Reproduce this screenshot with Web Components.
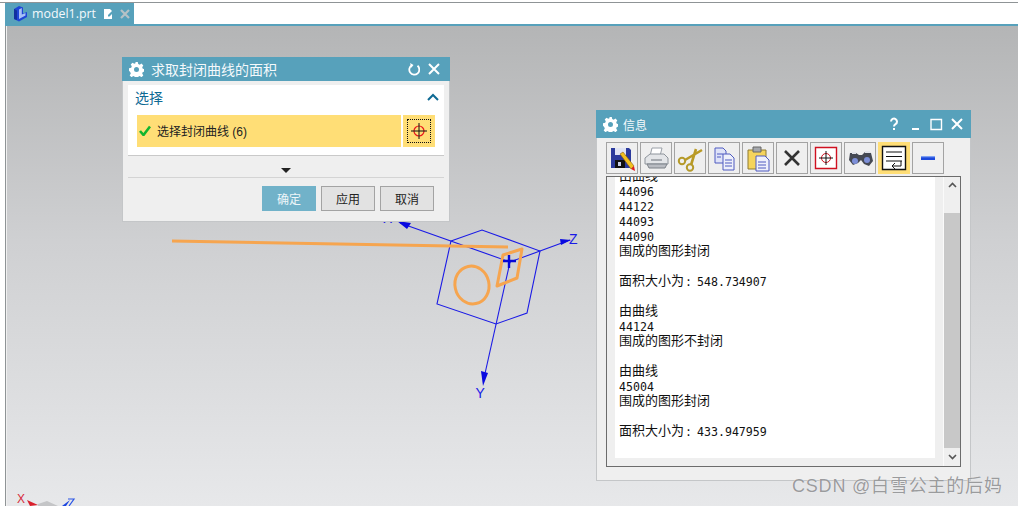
<!DOCTYPE html>
<html>
<head>
<meta charset="utf-8">
<title>model1.prt</title>
<style>
  html, body { margin: 0; height: 100%; background: #fff; overflow: hidden; }
  body { font-family: "Liberation Sans", "Noto Sans CJK SC", sans-serif; }
  .info-text { white-space: pre; }
  .info-text span { font-family: "Noto Sans CJK SC", sans-serif; font-size: 13px; line-height: 9px; vertical-align: top; }
  .info-text i { font-style: normal; letter-spacing: -1px; margin-left: 1px; }
</style>
</head>
<body>
<cad-app>
  <cad-triad></cad-triad>
  <cad-window slot="windows" heading="求取封闭曲线的面积" style="left:115px;top:31px;width:328px;height:165px;--title-size:14px;--title-gap:7px" controls="reset close">
    <curve-dialog></curve-dialog>
  </cad-window>
  <cad-window slot="windows" heading="信息" style="left:589px;top:84px;width:375px;height:371px;--title-size:12px;--title-gap:5px" controls="help min max close">
    <info-panel>
      <tool-button icon="save"></tool-button>
      <tool-button icon="print"></tool-button>
      <tool-button icon="cut"></tool-button>
      <tool-button icon="copy"></tool-button>
      <tool-button icon="paste"></tool-button>
      <tool-button icon="delete"></tool-button>
      <tool-button icon="target"></tool-button>
      <tool-button icon="find"></tool-button>
      <tool-button icon="wrap" active></tool-button>
      <tool-button icon="minus"></tool-button>
      <div slot="text" class="info-text"><span>由曲线</span>
44096
44122
44093
44090
<span>围成的图形封闭</span>

<span>面积大小为</span><i>: </i>548.734907

<span>由曲线</span>
44124
<span>围成的图形不封闭</span>

<span>由曲线</span>
45004
<span>围成的图形封闭</span>

<span>面积大小为</span><i>: </i>433.947959</div>
    </info-panel>
  </cad-window>
</cad-app>

<script>
const appTemplate = document.createElement('template');
appTemplate.innerHTML = `
  <style>
    :host {
        display: flex;
        flex-direction: column;
        height: 506px;
        width: 1018px;
        position: relative;
        overflow: hidden;
    }
    .topline { height: 1px; margin-top: 2px; background: #8f9496; flex: none; }
    .tabs { height: 21px; flex: none; display: flex; padding-left: 5px; }
    .tab {
        width: 129px;
        background: #57a1bb;
        color: #f4f9fb;
        display: flex;
        align-items: center;
        font-size: 12.4px;
        box-sizing: border-box;
        padding-left: 7px;
    }
    .tab span { margin-left: 4px; width: 65px; font-family: "Open Sans", "Liberation Sans", sans-serif; }
    .tab svg { display: block; flex: none; }
    .rule { height: 2px; background: #57a1bb; flex: none; margin-left: 5px; }
    .view {
        flex: 1;
        margin-left: 6px;
        border-left: 1px solid #f0f0f0;
        position: relative;
        background: linear-gradient(#b4b5b6, #cfd0d2 45%, #e7e8ea);
        box-shadow: -1px 0 0 #8f9496;
    }
    .mark {
        position: absolute;
        left: 785px;
        top: 448px;
        font-size: 18px;
        line-height: 24px;
        letter-spacing: .8px;
        color: #9a9b9d;
        text-shadow: 0 0 1px #fff;
        white-space: nowrap;
    }
  </style>
  <div class="topline"></div>
  <div class="tabs">
    <div class="tab">
      <svg width="16" height="17" viewBox="0 0 16 17"><path d="M2 4 7 1l4 1.500v6L15 7v5l-8 4.500L2 14z" fill="#1f46d6"/><path d="M7 4.500 9.800 3v6.500L13.500 8v2.500L7 14z" fill="#a7c0f6"/><path d="M2 4l3 1.500V15l-3-1z" fill="#11309f"/></svg>
      <span>model1.prt</span>
      <svg width="11" height="12" viewBox="0 0 11 12" style="margin-left:6px"><path d="M1 1h6l2 2v8H1z" fill="#fff"/><path d="M5 7l4-4 1.500 1.500-4 4H5z" fill="#57a1bb"/></svg>
      <svg width="10" height="10" viewBox="0 0 10 10" style="margin-left:6px"><path d="M1 1l8 8M9 1 1 9" stroke="#b7c2c6" stroke-width="2.200"/></svg>
    </div>
  </div>
  <div class="rule"></div>
  <div class="view" id="view">
    <slot></slot>
    <slot name="windows"></slot>
    <div class="mark">CSDN @白雪公主的后妈</div>
  </div>
`;

class CadApp extends HTMLElement {
    constructor() {
        super();
        this.attachShadow({mode: 'open'}).appendChild(appTemplate.content.cloneNode(true));
    }
}

const triadTemplate = document.createElement('template');
triadTemplate.innerHTML = `
  <style>
    :host { position: absolute; left: -7px; top: -26px; width: 1018px; height: 506px; display: block; }
    svg { display: block; }
    text { font: 14px "Liberation Sans", sans-serif; }
  </style>
  <svg width="1018" height="506" viewBox="0 0 1018 506">
    <g fill="none" stroke="#1a1ae6" stroke-width="1.100">
      <path d="M451 241 482 230 540 251 527 313 496 324 437 304z"/>
      <path d="M400 223 510 262 570 240"/>
      <path d="M510 262 484 378"/>
    </g>
    <path d="M397 221 411 223 407 229z" fill="#0a0ae0"/>
    <path d="M571 240 560 239 561 245z" fill="#0a0ae0"/>
    <path d="M483 386 481 371 488 373z" fill="#0a0ae0"/>
    <g fill="none" stroke="#f6a54f" stroke-width="3">
      <path d="M172 241 508 247"/>
      <ellipse cx="472" cy="285" rx="17" ry="19" transform="rotate(-12 472 285)"/>
      <path d="M503 255 522 249 517 278 497 286z" stroke-linejoin="round"/>
    </g>
    <path d="M509 255v13M503 261h13" stroke="#0606d8" stroke-width="2.400"/>
    <text x="383" y="223" fill="#1a1ae6">X</text>
    <text x="569" y="244" fill="#1a1ae6">Z</text>
    <text x="475.500" y="398" fill="#1a1ae6">Y</text>
    <text x="17" y="503" fill="#d62c3c" style="font-size:12px">X</text>
    <path d="M27 500 38 505 30 506z" fill="#d9202c"/>
    <path d="M38 504 47 501 58 506H38z" fill="#c4c5c7"/>
    <path d="M62 506 70 500 66 506z" fill="#1a44e0"/>
    <path d="M68 499h6l-5 7" fill="none" stroke="#2a55e6" stroke-width="1.200"/>
  </svg>
`;

class CadTriad extends HTMLElement {
    constructor() {
        super();
        this.attachShadow({mode: 'open'}).appendChild(triadTemplate.content.cloneNode(true));
    }
}

const controlIcons = {
    reset: '<path d="M11.500 3.800A5 5 0 1 1 6 3.200" fill="none" stroke="#fff" stroke-width="1.800"/><path d="M4.500 0.800v5l3-2.500z" fill="#fff" transform="rotate(-10 6 3)"/>',
    close: '<path d="M2 2l10 10M12 2 2 12" stroke="#fff" stroke-width="2"/>',
    min: '<path d="M4 12h7" stroke="#fff" stroke-width="2"/>',
    max: '<path d="M2 2.500h10.500V12.500H2z" fill="none" stroke="#fff" stroke-width="1.400"/>',
    help: '<path d="M4 4.500a3 3 0 1 1 4.500 2.700C7.400 7.900 7 8.400 7 9.500" fill="none" stroke="#fff" stroke-width="2"/><path d="M6 11h2v2H6z" fill="#fff"/>'
};

const gearIcon = `<svg width="15" height="15" viewBox="0 0 15 15"><g fill="#fff"><path fill-rule="evenodd" d="M6.200 0h2.600l.4 2 1.500.7 1.800-1.100 1.800 1.800-1.100 1.800.6 1.500 2.100.4v2.600l-2.100.4-.6 1.500 1.100 1.800-1.800 1.800-1.800-1.100-1.500.6-.4 2.100H6.200l-.4-2.100-1.500-.6-1.800 1.100-1.800-1.800 1.100-1.800-.6-1.500L0 8.800V6.200l2.200-.4.600-1.500-1.100-1.800 1.800-1.800 1.800 1.100 1.500-.7zM7.500 5a2.500 2.500 0 1 0 0 5 2.500 2.500 0 0 0 0-5z"/></g></svg>`;

const windowTemplate = document.createElement('template');
windowTemplate.innerHTML = `
  <style>
    :host {
        position: absolute;
        display: flex;
        flex-direction: column;
        box-sizing: border-box;
        background: #efefef;
        box-shadow: inset 0 0 0 1px #c4c6c8;
    }
    .bar {
        height: 24px;
        flex: none;
        background: #57a1bb;
        color: #f4f9fb;
        display: flex;
        align-items: center;
        padding: 0 9px 0 7px;
        font-size: var(--title-size, 13px);
    }
    .bar svg { display: block; flex: none; }
    .title { flex: 1; margin-left: var(--title-gap, 8px); }
    .controls { display: flex; gap: 7px; }
    .body { flex: 1; min-height: 0; display: flex; flex-direction: column; }
    ::slotted(*) { flex: 1; }
  </style>
  <div class="bar">
    <span id="gear"></span>
    <div class="title" id="title"></div>
    <div class="controls" id="controls"></div>
  </div>
  <div class="body"><slot></slot></div>
`;

class CadWindow extends HTMLElement {
    constructor() {
        super();
        this.attachShadow({mode: 'open'}).appendChild(windowTemplate.content.cloneNode(true));
    }

    $(selector) {
        return this.shadowRoot.querySelector(selector);
    }

    connectedCallback() {
        this.$('#title').textContent = this.getAttribute('heading');
        this.$('#gear').innerHTML = gearIcon;
        const names = (this.getAttribute('controls') || '').split(' ');
        this.$('#controls').innerHTML = names.map(name =>
            `<svg width="14" height="14" viewBox="0 0 14 14">${controlIcons[name]}</svg>`).join('');
        if (names.includes('help')) {
            this.$('.bar').style.height = '28px';
            this.$('.bar').style.paddingRight = '7px';
        }
    }
}

const dialogTemplate = document.createElement('template');
dialogTemplate.innerHTML = `
  <style>
    :host { display: flex; flex-direction: column; font-size: 12px; color: #222; }
    .group {
        margin: 4px 6px 0;
        height: 71px;
        box-sizing: border-box;
        background: #fff;
        border-bottom: 1px solid #c9c9c9;
        padding: 0 9px;
    }
    .head {
        height: 30px;
        display: flex;
        align-items: center;
        justify-content: space-between;
        color: #0e6a94;
        font-size: 14px;
        margin-left: -2px;
        padding-bottom: 6px;
        box-sizing: border-box;
    }
    .head svg { display: block; margin-right: -4px; }
    .row { display: flex; gap: 2px; height: 32px; }
    .pick {
        flex: 1;
        background: #ffde76;
        display: flex;
        align-items: center;
        padding: 0 0 2px 2px;
        box-sizing: border-box;
        gap: 6px;
    }
    .pick svg { display: block; }
    .target {
        width: 32px;
        background: #ffde76;
        display: flex;
        align-items: center;
        justify-content: center;
    }
    .target div { width: 24px; height: 24px; border: 1px dotted #111; box-sizing: border-box; }
    .target svg { display: block; margin: 0; }
    .more { height: 22px; padding-top: 7px; box-sizing: border-box; display: flex; align-items: center; justify-content: center; border-bottom: 1px solid #d4d4d4; margin: 0 6px; }
    .more i { border: 5px solid transparent; border-top: 5px solid #222; border-bottom: 0; display: block; }
    .actions { display: flex; justify-content: flex-end; gap: 5px; padding: 8px 16px 0 0; }
    .btn {
        width: 54px;
        height: 25px;
        box-sizing: border-box;
        border: 1px solid #a3a3a3;
        background: #e2e2e2;
        display: flex;
        align-items: center;
        justify-content: center;
    }
    .btn.primary { background: #71b2c9; border-color: #71b2c9; color: #eef6f9; }
  </style>
  <div class="group">
    <div class="head">
      <span>选择</span>
      <svg width="12" height="8" viewBox="0 0 12 8"><path d="M1 7 6 2l5 5" fill="none" stroke="#0e6a94" stroke-width="2"/></svg>
    </div>
    <div class="row">
      <div class="pick">
        <svg width="12" height="11" viewBox="0 0 12 11"><path d="M1 6l3.500 4L11 1.500" fill="none" stroke="#12b52e" stroke-width="2.600"/></svg>
        <span>选择封闭曲线 (6)</span>
      </div>
      <div class="target"><div>
        <svg width="22" height="22" viewBox="0 0 22 22"><circle cx="11" cy="11" r="5" fill="none" stroke="#e8141c" stroke-width="1.200"/><path d="M3 11h16M11 3v16" stroke="#111" stroke-width="1"/></svg>
      </div></div>
    </div>
  </div>
  <div class="more"><i></i></div>
  <div class="actions">
    <div class="btn primary">确定</div>
    <div class="btn">应用</div>
    <div class="btn">取消</div>
  </div>
`;

class CurveDialog extends HTMLElement {
    constructor() {
        super();
        this.attachShadow({mode: 'open'}).appendChild(dialogTemplate.content.cloneNode(true));
    }
}

const toolIcons = {
    save: '<path d="M3 4h18l2 2v18H3z" fill="#2b3a9c"/><path d="M7 4h11v7H7z" fill="#dfe3f4"/><path d="M7 16h10v8H7z" fill="#111"/><path d="M10 18h3v4h-3z" fill="#c8cfe8"/><path d="M12 10l3-2 11 14-3 3z" fill="#f0c020" stroke="#8a5a10" stroke-width=".6"/><path d="M23 25l3-3 1 5z" fill="#e01c1c"/>',
    print: '<path d="M10 4h10l-2 8H8z" fill="#fff" stroke="#9aa0a8"/><path d="M3 14 8 10h14l4 4v6H3z" fill="#e3e5e8" stroke="#8d939a"/><path d="M5 20h20l-2 4H7z" fill="#b9bcc2" stroke="#7d8289"/><path d="M9 16h11" stroke="#6b7178"/>',
    cut: '<path d="M9 16 26 6M15 21 20 5" stroke="#b99a26" stroke-width="2.600" fill="none"/><circle cx="6" cy="17" r="3.200" fill="none" stroke="#b59a2a" stroke-width="2"/><circle cx="14" cy="23.500" r="3.200" fill="none" stroke="#b59a2a" stroke-width="2"/>',
    copy: '<path d="M5 4h8l3 3v12H5z" fill="#dfe3f8" stroke="#4f5bc0"/><path d="M13 10h7l4 4v12H13z" fill="#eef0fb" stroke="#4f5bc0"/><path d="M15 16h7M15 19h7M15 22h7M7 10h6M7 13h4" stroke="#4f5bc0"/>',
    paste: '<path d="M4 6h18v19H4z" fill="#f5d45c" stroke="#8f7a30"/><path d="M9 3h8v5H9z" fill="#a5a8ad" stroke="#666"/><path d="M12 12h9l4 4v11H12z" fill="#eef0fb" stroke="#4f5bc0"/><path d="M14 18h8M14 21h8M14 24h8" stroke="#4f5bc0"/>',
    delete: '<path d="M7 7l14 14M21 7 7 21" stroke="#333" stroke-width="2.600"/>',
    target: '<path d="M3.500 3.500h21v21h-21z" fill="#fff" stroke="#d01020" stroke-width="1.400"/><circle cx="14" cy="14" r="4.500" fill="none" stroke="#d01020"/><path d="M7 14h14M14 7v14" stroke="#111"/>',
    find: '<path d="M4 9h6l3 2h3l3-3 6 1 2 8-4 5-5-2-3-4-3 3-5 2-4-5z" fill="#454953"/><circle cx="9" cy="17" r="3" fill="#7d8fd8"/><circle cx="21" cy="16" r="3" fill="#7d8fd8"/><path d="M6 9h4M19 8h5" stroke="#e2e4ea" stroke-width="2"/>',
    wrap: '<path d="M2.500 2.500h23v23h-23z" fill="#fff" stroke="#111" stroke-width="1.400"/><path d="M6 8h16M6 12.500h16M6 17h16" stroke="#111"/><path d="M21 17v5h-9" fill="none" stroke="#111"/><path d="M15 19l-3 3 3 3" fill="none" stroke="#111"/>',
    minus: '<path d="M7 12h14v4H7z" fill="#1c48dc"/><path d="M7 12h14v1.300H7z" fill="#7ea0f2"/>'
};

const toolTemplate = document.createElement('template');
toolTemplate.innerHTML = `
  <style>
    :host {
        display: flex;
        width: 32px;
        height: 32px;
        box-sizing: border-box;
        border: 1px solid #a3a3a3;
        background: #efefef;
        align-items: center;
        justify-content: center;
    }
    :host([active]) { background: #ffde76; border-color: #ffde76; }
    svg { display: block; }
  </style>
  <svg width="28" height="28" viewBox="0 0 28 28"></svg>
`;

class ToolButton extends HTMLElement {
    constructor() {
        super();
        this.attachShadow({mode: 'open'}).appendChild(toolTemplate.content.cloneNode(true));
    }

    connectedCallback() {
        this.shadowRoot.querySelector('svg').innerHTML = toolIcons[this.getAttribute('icon')];
    }
}

const panelTemplate = document.createElement('template');
panelTemplate.innerHTML = `
  <style>
    :host { display: flex; flex-direction: column; padding: 4px 10px 14px; min-height: 0; }
    .tools { display: flex; gap: 2px; height: 32px; flex: none; }
    .box {
        margin-top: 2px;
        flex: 1;
        min-height: 0;
        border: 1px solid #6c6c6c;
        display: flex;
        background: #efefef;
    }
    .page {
        margin: 0 0 8px 8px;
        width: 320px;
        background: #fff;
        overflow: hidden;
        padding: 0 0 0 4px;
        box-sizing: border-box;
    }
    .text {
        margin-top: -7px;
        font: 11.6px/15px "DejaVu Sans Mono", "Noto Sans CJK SC", monospace;
        color: #111;
    }
    .scroll {
        margin-left: 8px;
        width: 17px;
        display: flex;
        flex-direction: column;
        background: #efefef;
        border-left: 1px solid #fafafa;
        box-sizing: border-box;
    }
    .arrow { height: 36px; flex: none; display: flex; justify-content: center; padding-top: 5px; box-sizing: border-box; }
    .arrow.down { height: 18px; padding-top: 6px; }
    .thumb { flex: 1; background: #c8c8c8; }
    .arrow svg { display: block; }
  </style>
  <div class="tools"><slot></slot></div>
  <div class="box">
    <div class="page"><div class="text"><slot name="text"></slot></div></div>
    <div class="scroll">
      <div class="arrow"><svg width="9" height="6" viewBox="0 0 9 6"><path d="M1 5l3.500-3.500L8 5" fill="none" stroke="#555" stroke-width="1.600"/></svg></div>
      <div class="thumb"></div>
      <div class="arrow down"><svg width="9" height="6" viewBox="0 0 9 6"><path d="M1 1l3.500 3.500L8 1" fill="none" stroke="#555" stroke-width="1.600"/></svg></div>
    </div>
  </div>
`;

class InfoPanel extends HTMLElement {
    constructor() {
        super();
        this.attachShadow({mode: 'open'}).appendChild(panelTemplate.content.cloneNode(true));
    }
}

customElements.define('cad-app', CadApp);
customElements.define('cad-triad', CadTriad);
customElements.define('cad-window', CadWindow);
customElements.define('curve-dialog', CurveDialog);
customElements.define('tool-button', ToolButton);
customElements.define('info-panel', InfoPanel);
</script>
</body>
</html>
